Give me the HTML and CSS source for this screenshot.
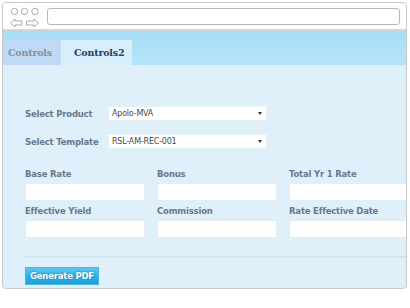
FILE: index.html
```html
<!DOCTYPE html>
<html>
<head>
<meta charset="utf-8">
<link rel="stylesheet" href="styles.css">
</head>
<body>
<div class="frame">
  <div class="chrome">
    <svg class="nav-icons" width="40" height="26" viewBox="0 0 40 26">
      <g fill="none" stroke="#a9a9a9" stroke-width="1">
        <circle cx="9.5" cy="6.5" r="3.2"/>
        <circle cx="19.5" cy="6.5" r="3.2"/>
        <circle cx="30" cy="6.5" r="3.2"/>
        <path d="M5.5 18 L10 14 L10 16 L17 16 L17 20 L10 20 L10 22 Z"/>
        <path d="M33.5 18 L29 14 L29 16 L21.5 16 L21.5 20 L29 20 L29 22 Z"/>
      </g>
    </svg>
    <div class="address"></div>
  </div>
  <div class="header">
    <div class="tabs">
      <div class="tab tab-inactive">Controls</div>
      <div class="tab tab-active">Controls2</div>
    </div>
  </div>
  <div class="content">
    <div class="select-row">
      <span class="select-label">Select Product</span>
      <div class="select"><span>Apolo-MVA</span><i class="caret"></i></div>
    </div>
    <div class="select-row">
      <span class="select-label">Select Template</span>
      <div class="select"><span>RSL-AM-REC-001</span><i class="caret"></i></div>
    </div>
    <div class="fields">
      <div class="field"><label>Base Rate</label><div class="input"></div></div>
      <div class="field"><label>Bonus</label><div class="input"></div></div>
      <div class="field"><label>Total Yr 1 Rate</label><div class="input"></div></div>
      <div class="field"><label>Effective Yield</label><div class="input"></div></div>
      <div class="field"><label>Commission</label><div class="input"></div></div>
      <div class="field"><label>Rate Effective Date</label><div class="input"></div></div>
    </div>
    <div class="divider"></div>
    <button class="btn">Generate PDF</button>
  </div>
</div>
</body>
</html>
```

FILE: styles.css
```css
html, body {
  margin: 0;
  padding: 0;
  background: #ffffff;
}
body {
  width: 410px;
  height: 308px;
  overflow: hidden;
}
.frame {
  margin: 2px 0 0 2px;
  width: 403px;
  height: 285px;
  border: 1px solid #c9c9c9;
  border-radius: 4px;
  overflow: hidden;
  background: #dff0fa;
  display: flex;
  flex-direction: column;
}
.chrome {
  height: 26px;
  background: #ffffff;
  border-bottom: 2px solid #d6d6d6;
  display: flex;
  align-items: flex-start;
  flex-shrink: 0;
}
.nav-icons {
  display: block;
  margin: 2px 0 0 2px;
}
.address {
  margin: 5px 0 0 2px;
  width: 351px;
  height: 15px;
  border: 1px solid #b8b8b8;
  border-radius: 3px;
  background: #fff;
}
.header {
  height: 34px;
  background: linear-gradient(to bottom, #a6ddf6 0%, #b5e4f9 100%);
  display: flex;
  align-items: flex-end;
  flex-shrink: 0;
}
.tabs {
  display: flex;
  height: 25px;
}
.tab {
  font-family: "DejaVu Serif", "Liberation Serif", serif;
  font-weight: bold;
  font-size: 9.5px;
  line-height: 25px;
  letter-spacing: -0.2px;
}
.tab-inactive {
  width: 53px;
  padding-left: 5px;
  background: #bfdaf7;
  color: #8a8e96;
}
.tab-active {
  width: 58px;
  padding-left: 13px;
  background: #d8effb;
  color: #213d69;
}
.content {
  flex: 1;
  padding: 41px 0 0 22px;
  font-family: "DejaVu Sans", Verdana, sans-serif;
}
.select-row {
  display: flex;
  align-items: center;
  height: 15px;
  margin-bottom: 13px;
}
.select-label {
  width: 83px;
  font-size: 8.5px;
  font-weight: bold;
  color: #6a788c;
  letter-spacing: -0.2px;
}
.select {
  width: 159px;
  height: 15px;
  background: #ffffff;
  border: 1px solid #e9f1f6;
  box-sizing: border-box;
  display: flex;
  align-items: center;
  justify-content: space-between;
  padding: 0 4px 0 3px;
  font-size: 8px;
  color: #4a4a4a;
  letter-spacing: -0.2px;
}
.caret {
  width: 0;
  height: 0;
  border-left: 2.5px solid transparent;
  border-right: 2.5px solid transparent;
  border-top: 3px solid #333;
}
.fields {
  margin-top: 19px;
  display: grid;
  grid-template-columns: repeat(3, 120px);
  column-gap: 12px;
  row-gap: 4px;
}
.field label {
  display: block;
  height: 12px;
  line-height: 12px;
  margin-bottom: 3px;
  font-size: 8.5px;
  font-weight: bold;
  color: #6a788c;
  letter-spacing: -0.2px;
}
.input {
  height: 18px;
  background: #ffffff;
  border: 1px solid #e2edf4;
  box-sizing: border-box;
}
.divider {
  margin-top: 18px;
  height: 2px;
  background: #cfe6f2;
}
.btn {
  display: block;
  margin-top: 9px;
  width: 74px;
  height: 18px;
  padding: 0;
  border: 1px solid #4cb6e3;
  background: linear-gradient(to bottom, #5ac8f0 0%, #2bb0e6 55%, #1aa2dc 100%);
  color: #ffffff;
  font-family: "DejaVu Sans", Verdana, sans-serif;
  font-size: 8.5px;
  font-weight: bold;
  letter-spacing: -0.2px;
  text-shadow: 0 0 2px #1b6f9c;
}
```
